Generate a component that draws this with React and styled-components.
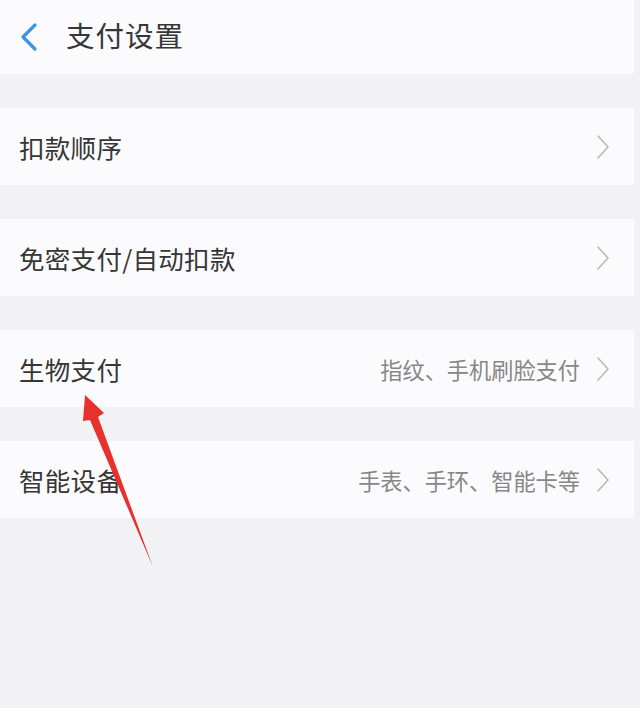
import React from "react";
import styled, { createGlobalStyle } from "styled-components";

const Global = createGlobalStyle`
  html, body { margin: 0; padding: 0; background: #f2f2f4; }
  body { font-family: "Noto Sans CJK SC", "Noto Sans", sans-serif; }
`;

const Page = styled.div`
  position: relative;
  width: 640px;
  height: 708px;
  background: #f2f2f4;
  overflow: hidden;
`;

const Column = styled.div`
  width: 634px;
  display: flex;
  flex-direction: column;
  gap: 34px;
`;

const Header = styled.div`
  height: 74px;
  background: #fbfbfd;
  display: flex;
  align-items: center;
  padding-left: 18px;
  gap: 26px;
`;

const Title = styled.div`
  font-size: 28.5px;
  color: #363636;
  letter-spacing: 1px;
  line-height: 1;
  margin-bottom: 4px;
`;

const Row = styled.div`
  height: 77px;
  background: #fbfbfd;
  display: flex;
  align-items: center;
  padding: 0 24px 0 19px;
`;

const Label = styled.div`
  flex: 1;
  font-size: 25.5px;
  color: #363636;
  letter-spacing: 0.3px;
`;

const Hint = styled.div`
  font-size: 22.2px;
  color: #878787;
  margin-right: 16px;
`;

const Arrow = styled.svg`
  position: absolute;
  left: 0;
  top: 0;
  pointer-events: none;
`;

const Back = () => (
  <svg width="22" height="30" viewBox="0 0 22 30">
    <path d="M17 3 L5 15 L17 27" fill="none" stroke="#3b95e0" strokeWidth="3.2" strokeLinecap="round" strokeLinejoin="round" />
  </svg>
);

const Chevron = () => (
  <svg width="14" height="26" viewBox="0 0 14 26">
    <path d="M2 2 L12 13 L2 24" fill="none" stroke="#b9b9bd" strokeWidth="1.6" strokeLinecap="round" strokeLinejoin="round" />
  </svg>
);

const items = [
  { label: "扣款顺序" },
  { label: "免密支付/自动扣款" },
  { label: "生物支付", hint: "指纹、手机刷脸支付" },
  { label: "智能设备", hint: "手表、手环、智能卡等" },
];

export default function App() {
  return (
    <Page>
      <Global />
      <Column>
        <Header>
          <Back />
          <Title>支付设置</Title>
        </Header>
        {items.map((it) => (
          <Row key={it.label}>
            <Label>{it.label}</Label>
            {it.hint && <Hint>{it.hint}</Hint>}
            <Chevron />
          </Row>
        ))}
      </Column>
      <Arrow width="640" height="708" viewBox="0 0 640 708">
        <path d="M85 395 L104 413 L98 417 L153 567 L90 420 L83 421 Z" fill="#e8302f" />
      </Arrow>
    </Page>
  );
}
